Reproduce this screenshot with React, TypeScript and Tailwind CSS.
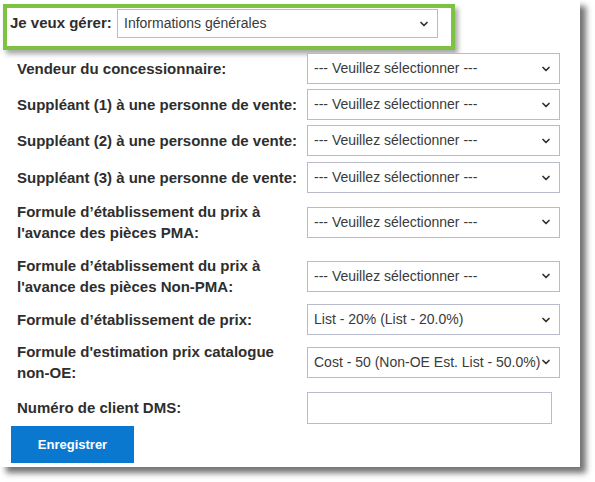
import { ChevronDown } from "lucide-react";

const font = { fontFamily: '"Liberation Sans", Arial, sans-serif' };

type Row = {
  label: string[];
  value?: string;
  input?: boolean;
  gap: string;
};

const rows: Row[] = [
  { label: ["Vendeur du concessionnaire:"], value: "--- Veuillez sélectionner ---", gap: "mt-[3px]" },
  { label: ["Suppléant (1) à une personne de vente:"], value: "--- Veuillez sélectionner ---", gap: "mt-[5px]" },
  { label: ["Suppléant (2) à une personne de vente:"], value: "--- Veuillez sélectionner ---", gap: "mt-[5px]" },
  { label: ["Suppléant (3) à une personne de vente:"], value: "--- Veuillez sélectionner ---", gap: "mt-[6px]" },
  {
    label: ["Formule d’établissement du prix à", "l'avance des pièces PMA:"],
    value: "--- Veuillez sélectionner ---",
    gap: "mt-[8px]",
  },
  {
    label: ["Formule d’établissement du prix à", "l'avance des pièces Non-PMA:"],
    value: "--- Veuillez sélectionner ---",
    gap: "mt-[12px]",
  },
  { label: ["Formule d’établissement de prix:"], value: "List - 20% (List - 20.0%)", gap: "mt-[7px]" },
  {
    label: ["Formule d'estimation prix catalogue", "non-OE:"],
    value: "Cost - 50 (Non-OE Est. List - 50.0%)",
    gap: "mt-[6px]",
  },
  { label: ["Numéro de client DMS:"], input: true, gap: "mt-[9px]" },
];

function FakeSelect({ value, className }: { value: string; className: string }) {
  return (
    <div
      className={`relative flex items-center border border-[#b7bbcb] bg-white pl-[6px] text-[14px] text-[#3a3a3a] ${className}`}
    >
      <span className="whitespace-nowrap">{value}</span>
      <ChevronDown size={12} strokeWidth={3.5} className="absolute right-[7px] top-1/2 -translate-y-1/2 text-[#333]" />
    </div>
  );
}

export default function App() {
  return (
    <div className="h-[482px] w-[595px] bg-white" style={font}>
      <div className="h-[467px] w-[580px] bg-white pt-[4px] shadow-[6px_6px_6px_rgba(0,0,0,0.55)]">
        {/* section picker */}
        <div className="ml-[3px] flex h-[46px] w-[452px] items-start border-[4px] border-[#7dc242] pl-[3px] pt-[1px] shadow-[3px_4px_5px_rgba(0,0,0,0.35)]">
          <span className="flex h-[29px] w-[107px] items-center text-[15px] font-bold text-[#2e2e2e]">Je veux gérer:</span>
          <FakeSelect value="Informations générales" className="h-[29px] w-[321px]" />
        </div>

        <div className="pl-[17px]">
          {rows.map((row) => (
            <div
              key={row.label.join(" ")}
              className={`flex items-center ${row.gap} ${row.label.length > 1 ? "h-[42px]" : "h-[31px]"}`}
            >
              <div className="w-[290px] text-[15px] font-bold leading-[21px] text-[#2e2e2e]">
                {row.label.map((l) => (
                  <div key={l}>{l}</div>
                ))}
              </div>
              {row.input ? (
                <div className="h-[32px] w-[245px] border border-[#b7bbcb] bg-white" />
              ) : (
                <FakeSelect value={row.value ?? ""} className="h-[31px] w-[253px]" />
              )}
            </div>
          ))}
        </div>

        <button className="ml-[11px] mt-[3px] flex h-[37px] w-[123px] items-center justify-center bg-[#0b78d0] text-[13px] font-bold text-white">
          Enregistrer
        </button>
      </div>
    </div>
  );
}
